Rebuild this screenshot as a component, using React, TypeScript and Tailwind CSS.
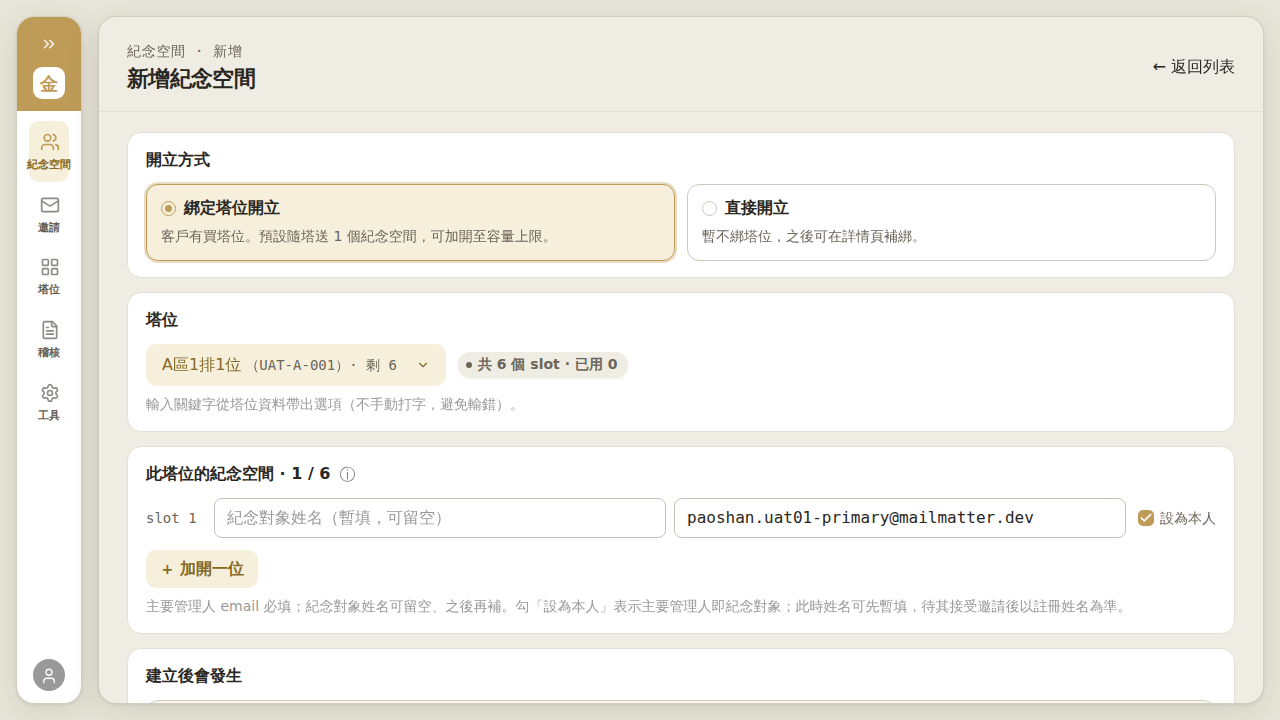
import React from 'react'
import { Check, ChevronDown, ChevronsRight, FileText, LayoutGrid, Mail, Settings, User, Users } from 'lucide-react'

const navItems = [
    { label: '紀念空間', icon: Users, active: true },
    { label: '邀請', icon: Mail, active: false },
    { label: '塔位', icon: LayoutGrid, active: false },
    { label: '稽核', icon: FileText, active: false },
    { label: '工具', icon: Settings, active: false },
]

// Zen Hei has no bold face, bold text leaves it out so the browser thickens the fallback
const boldFont = "font-bold font-['DejaVu_Sans',sans-serif]"
const monoFont = "font-['DejaVu_Sans_Mono','WenQuanYi_Zen_Hei','Noto_Sans_CJK_TC',monospace]"

const Sidebar = () => {
    return (
        <aside className="w-[66px] shrink-0 flex flex-col rounded-[18px] border border-[#d3cfc1] bg-white overflow-hidden shadow-[0_1px_3px_#3c321e1a,0_8px_32px_#3c321e1f]">
            <div className="h-[94px] bg-[#bf9b58] flex flex-col items-center pt-[18px] shrink-0">
                <button className="text-white/90 h-[18px]">
                    <ChevronsRight size={18} strokeWidth={2} />
                </button>
                <div className={`mt-[14px] w-8 h-8 rounded-[9px] bg-white flex items-center justify-center pt-px text-[18px] leading-none text-[#bf9b58] ${boldFont}`}>金</div>
            </div>
            <nav className="flex flex-col items-center pt-[10px] gap-[2px]">
                {navItems.map(({ label, icon: Icon, active }) => (
                    <a
                        key={label}
                        className={`w-10 h-[60.75px] rounded-[10px] flex flex-col items-center pt-[10.75px] whitespace-nowrap ${active ? 'bg-[#f5efdc] text-[#bf9b58]' : 'text-[#8a8a86]'}`}
                    >
                        <Icon size={20} strokeWidth={2} className="shrink-0 ml-px" />
                        <span className={`mt-[4px] text-[11px] leading-[17px] ${boldFont} ${active ? 'text-[#866a26]' : 'text-[#676052]'}`}>{label}</span>
                    </a>
                ))}
            </nav>
            <div className="mt-auto mb-[12px] mx-auto w-8 h-8 rounded-full bg-[#999999] text-white flex items-center justify-center">
                <User size={18} strokeWidth={1.75} className="mt-px" />
            </div>
        </aside>
    )
}

const Card = ({ title, children }: { title: React.ReactNode; children: React.ReactNode }) => {
    return (
        <section className="rounded-[14px] border border-[#e2dfd4] bg-white px-[18px] py-4">
            <h2 className={`mb-[14px] h-[21px] text-[16px] leading-[21px] text-[#2a2723] flex items-center ${boldFont}`}>{title}</h2>
            {children}
        </section>
    )
}

const ModeOption = ({ title, hint, selected }: { title: string; hint: string; selected?: boolean }) => {
    return (
        <label className={`block h-[77px] rounded-[12px] border px-[14px] pt-[11px] ${selected ? 'border-[#bf9b58] bg-[#f5efdc] shadow-[0_0_0_2px_#bf9b5859]' : 'border-[#cbc8bc] bg-white'}`}>
            <div className="flex items-center gap-2">
                <span className={`w-[15px] h-[15px] rounded-full border flex items-center justify-center ${selected ? 'border-[#bf9b58]' : 'border-[#cbc8bc]'}`}>
                    {selected && <span className="w-[7px] h-[7px] rounded-full bg-[#bf9b58]" />}
                </span>
                <span className={`text-[16px] leading-6 text-[#2a2723] ${boldFont}`}>{title}</span>
            </div>
            <p className="mt-[6px] text-[14px] leading-[21px] text-[#6b6558]">{hint}</p>
        </label>
    )
}

const App = () => {
    return (
        <div className="h-screen overflow-hidden flex gap-4 p-4 bg-[#e8e6da] font-['DejaVu_Sans','WenQuanYi_Zen_Hei','Noto_Sans_CJK_TC',sans-serif] [text-spacing-trim:space-all] text-[#2a2723]">
            <Sidebar />
            <main className="flex-1 min-w-0 flex flex-col rounded-[18px] border border-[#d0ccbe] bg-[#efece4] overflow-hidden shadow-[0_1px_3px_#3c321e1a,0_8px_32px_#3c321e1f]">
                <header className="h-[95px] shrink-0 px-7 border-b border-[#e2dfd4] flex items-center justify-between">
                    <div className="pt-[6px]">
                        <div className={`text-[14px] leading-[21px] tracking-[0.05em] text-[#6b6558] ${monoFont}`}>紀念空間 · 新增</div>
                        <h1 className={`mt-px text-[22px] leading-[31px] tracking-[-0.03em] ${boldFont}`}>新增紀念空間</h1>
                    </div>
                    <a className="text-[16px] leading-6 mt-[5px]">← 返回列表</a>
                </header>
                <div className="flex flex-col gap-[14px] px-7 pt-5">
                    <Card title="開立方式">
                        <div className="grid grid-cols-2 gap-3">
                            <ModeOption title="綁定塔位開立" hint="客戶有買塔位。預設隨塔送 1 個紀念空間，可加開至容量上限。" selected />
                            <ModeOption title="直接開立" hint="暫不綁塔位，之後可在詳情頁補綁。" />
                        </div>
                    </Card>
                    <Card title="塔位">
                        <div className="flex items-center gap-3">
                            <button className="w-[300px] h-[42px] rounded-[10px] bg-[#f5efdc] px-4 flex items-center justify-between text-[#866a26]">
                                <span className="flex items-center gap-1">
                                    <span className="text-[16px]">A區1排1位</span>
                                    <span className={`text-[14px] text-[#6b6558] whitespace-pre ${monoFont}`}>（UAT-A-001）· 剩 6</span>
                                </span>
                                <ChevronDown size={14} />
                            </button>
                            <span className={`h-[26px] rounded-full bg-[#efece4] pl-2 pr-[10px] flex items-center gap-[6px] text-[14px] text-[#6b6558] shadow-[0_1px_3px_#3c321e14] ${boldFont}`}>
                                <span className="w-[6px] h-[6px] rounded-full bg-[#6b6558]" />
                                <span className="pb-[2px]">共 6 個 slot · 已用 0</span>
                            </span>
                        </div>
                        <p className="mt-2 text-[14px] leading-[21px] text-[#999999]">輸入關鍵字從塔位資料帶出選項（不手動打字，避免輸錯）。</p>
                    </Card>
                    <Card
                        title={
                            <>
                                此塔位的紀念空間 · 1 / 6
                                <span className="ml-[9px] pt-[3px] text-[16px] leading-[21px] font-normal text-[#7d7d79] font-['WenQuanYi_Zen_Hei','Noto_Sans_CJK_TC',sans-serif]">ⓘ</span>
                            </>
                        }
                    >
                        <div className="grid grid-cols-[60px_1fr_1fr_auto] gap-2 items-center">
                            <span className={`text-[14px] text-[#6b6558] ${monoFont}`}>slot 1</span>
                            <input
                                className="h-10 min-w-0 rounded-[8px] border border-[#c6c3b6] bg-white px-3 pb-[2px] text-[16px] placeholder:text-[#999999]"
                                placeholder="紀念對象姓名（暫填，可留空）"
                            />
                            <input
                                className="h-10 min-w-0 rounded-[8px] border border-[#c6c3b6] bg-white px-3 pb-[2px] text-[16px] font-['DejaVu_Sans_Mono',monospace]"
                                defaultValue="paoshan.uat01-primary@mailmatter.dev"
                            />
                            <label className="pl-1 flex items-center gap-[6px] text-[14px] text-[#6b6558]">
                                <span className="w-4 h-4 rounded-[5px] bg-[#bf9b58] text-white flex items-center justify-center">
                                    <Check size={14} strokeWidth={3} />
                                </span>
                                設為本人
                            </label>
                        </div>
                        <button className={`mt-3 h-[38px] w-[112px] rounded-[10px] bg-[#f5efdc] pl-[15.5px] flex items-center gap-[8.5px] text-[16px] text-[#866a26] whitespace-nowrap ${boldFont}`}>
                            <span className="w-[10px] text-[14px]">+</span>
                            加開一位
                        </button>
                        <p className="mt-2 text-[14px] leading-[21px] text-[#999999]">
                            主要管理人 email 必填；紀念對象姓名可留空、之後再補。勾「設為本人」表示主要管理人即紀念對象；此時姓名可先暫填，待其接受邀請後以註冊姓名為準。
                        </p>
                    </Card>
                    <Card title="建立後會發生">
                        <div className="h-[120px] rounded-[12px] border border-[#d3cfc1] bg-[#f7f5ee]" />
                    </Card>
                </div>
            </main>
        </div>
    )
}

export default App
